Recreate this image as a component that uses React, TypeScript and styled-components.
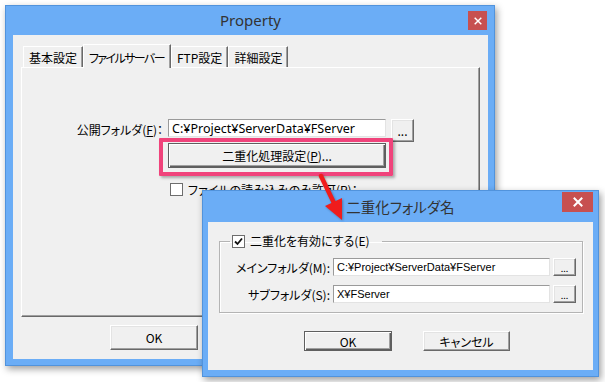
import React from "react";
import styled, { createGlobalStyle, css } from "styled-components";

const GlobalStyle = createGlobalStyle`
  html, body {
    margin: 0;
    padding: 0;
    background: #fff;
  }
  body {
    font-family: "Noto Sans CJK JP", sans-serif;
    font-feature-settings: "palt";
    color: #000;
  }
`;

const Desktop = styled.div`
  position: relative;
  width: 605px;
  height: 382px;
  overflow: hidden;
  background: #fff;
`;

const Window = styled.div<{ $x: number; $y: number; $w: number; $h: number; $pad: string }>`
  position: absolute;
  left: ${(p) => p.$x}px;
  top: ${(p) => p.$y}px;
  width: ${(p) => p.$w}px;
  height: ${(p) => p.$h}px;
  box-sizing: border-box;
  display: flex;
  flex-direction: column;
  padding: ${(p) => p.$pad};
  background: #6badf6;
  border: 1px solid #5193dc;
  box-shadow: 2px 3px 7px rgba(0, 0, 0, 0.38);
`;

const TitleBar = styled.div<{ $h: number }>`
  display: grid;
  grid-template-columns: 1fr auto 1fr;
  height: ${(p) => p.$h}px;
  flex: none;
`;

const Title = styled.div<{ $size: number; $top: number; $latin?: boolean }>`
  grid-column: 2;
  padding-top: ${(p) => p.$top}px;
  font-size: ${(p) => p.$size}px;
  color: #333;
  white-space: nowrap;
  ${(p) =>
    p.$latin &&
    css`
      font-family: "Noto Sans", "Noto Sans CJK JP", sans-serif;
    `}
`;

const CloseButton = styled.div<{ $w: number; $h: number; $top: number; $right: number }>`
  grid-column: 3;
  justify-self: end;
  align-self: start;
  display: flex;
  align-items: center;
  justify-content: center;
  width: ${(p) => p.$w}px;
  height: ${(p) => p.$h}px;
  margin-top: ${(p) => p.$top}px;
  margin-right: ${(p) => p.$right}px;
  background: #c75050;
`;

const Client = styled.div`
  flex: 1;
  display: flex;
  flex-direction: column;
  background: #f0f0f0;
`;

/* ---------- Property dialog ---------- */

const BackClient = styled(Client)`
  padding: 9px 8px 0 8px;
`;

const TabStrip = styled.div`
  display: flex;
  align-items: flex-end;
  height: 23px;
  padding-left: 2px;
  position: relative;
  z-index: 1;
`;

const Tab = styled.div<{ $active?: boolean; $tight?: boolean }>`
  box-sizing: border-box;
  height: ${(p) => (p.$active ? 24 : 21)}px;
  margin-bottom: ${(p) => (p.$active ? -1 : 0)}px;
  padding: ${(p) => (p.$active ? "1px 6px 0 5px" : "0 5px")};
  display: flex;
  align-items: center;
  font-size: 12px;
  letter-spacing: ${(p) => (p.$tight ? "-1.6px" : "0")};
  background: #f0f0f0;
  border-top: 1px solid #fff;
  border-left: 1px solid #fff;
  border-right: 1px solid #696969;
  box-shadow: inset -1px 0 0 #a0a0a0;
  white-space: nowrap;
`;

const TabPanel = styled.div`
  box-sizing: border-box;
  height: 250px;
  border-top: 1px solid #fff;
  border-left: 1px solid #fff;
  border-right: 1px solid #696969;
  border-bottom: 1px solid #696969;
  box-shadow: inset -1px -1px 0 #a0a0a0;
  padding-top: 51px;
`;

const PropForm = styled.div`
  display: grid;
  grid-template-columns: 141px 218px 23px;
  column-gap: 5px;
  align-items: start;
  font-size: 12px;
`;

const FieldLabel = styled.label<{ $top: number }>`
  text-align: right;
  white-space: nowrap;
  padding-top: ${(p) => p.$top}px;
`;

const TextBox = styled.div<{ $h: number; $font: string; $size: number }>`
  box-sizing: border-box;
  height: ${(p) => p.$h}px;
  padding: 0 3px;
  display: flex;
  align-items: center;
  background: #fff;
  border: 1px solid;
  border-color: #9a9a9a #e3e3e3 #e3e3e3 #9a9a9a;
  font-family: ${(p) => p.$font};
  font-size: ${(p) => p.$size}px;
  font-feature-settings: normal;
  white-space: nowrap;
  overflow: hidden;
`;

const Button = styled.div<{ $w: number; $h: number; $default?: boolean; $size?: number }>`
  box-sizing: border-box;
  width: ${(p) => p.$w}px;
  height: ${(p) => p.$h}px;
  display: flex;
  align-items: center;
  justify-content: center;
  background: #f0f0f0;
  font-size: ${(p) => p.$size ?? 12}px;
  white-space: nowrap;
  border: 1px solid;
  border-color: #fff #696969 #696969 #fff;
  box-shadow: inset -1px -1px 0 #a0a0a0, inset 1px 1px 0 #e3e3e3;
  ${(p) =>
    p.$default &&
    css`
      border-color: #5f5f5f;
      box-shadow: inset 1px 1px 0 #fff, inset -1px -1px 0 #5f5f5f, inset -2px -2px 0 #a0a0a0;
    `}
`;

const WideButton = styled(Button)`
  grid-column: 2;
  margin-top: 1px;
`;

const CheckRow = styled.div`
  grid-column: 2 / 4;
  margin-top: 13px;
  padding-left: 2px;
  display: flex;
  align-items: center;
  gap: 5px;
  white-space: nowrap;
`;

const Check = styled.span`
  box-sizing: border-box;
  width: 13px;
  height: 13px;
  flex: none;
  display: inline-flex;
  align-items: center;
  justify-content: center;
  background: #fff;
  border: 1px solid #6d6d6d;
`;

const Footer = styled.div<{ $top: number; $gap: number; $left: number }>`
  display: flex;
  gap: ${(p) => p.$gap}px;
  margin-top: ${(p) => p.$top}px;
  padding-left: ${(p) => p.$left}px;
`;

/* ---------- 二重化フォルダ名 dialog ---------- */

const FrontClient = styled(Client)`
  padding: 0 10px 0 11px;
  font-size: 12px;
`;

const Group = styled.fieldset`
  margin: 11px 0 0 0;
  padding: 0 0 9px 0;
  border: 1px solid #b4b4b4;
  box-shadow: 1px 1px 0 #fff, inset 1px 1px 0 #fff;
  min-width: 0;
`;

const GroupLegend = styled.legend`
  margin-left: 10px;
  padding: 0 12px 0 2px;
  height: 16px;
  line-height: 16px;
  display: flex;
  align-items: center;
  gap: 5px;
  white-space: nowrap;
`;

const FolderGrid = styled.div`
  display: grid;
  grid-template-columns: 110px 217px 23px;
  column-gap: 3px;
  row-gap: 9px;
  margin-top: 9px;
  align-items: center;
`;

const DotsLabel = styled.span`
  font-size: 9px;
  line-height: 1;
  padding-top: 3px;
`;

const Highlight = styled.div`
  position: absolute;
  left: 159px;
  top: 138px;
  width: 234px;
  height: 38px;
  box-sizing: border-box;
  border: 4px solid #f0437b;
  border-radius: 1px;
  box-shadow: 2px 2px 3px rgba(0, 0, 0, 0.3);
  pointer-events: none;
`;

const ArrowSvg = styled.svg`
  position: absolute;
  left: 310px;
  top: 168px;
  overflow: visible;
  filter: drop-shadow(1px 1px 1px rgba(0, 0, 0, 0.3));
`;

function CloseGlyph({ size, stroke }: { size: number; stroke: number }) {
  return (
    <svg width={size} height={size} viewBox="0 0 10 10">
      <path d="M1.5 1.5 L8.5 8.5 M8.5 1.5 L1.5 8.5" stroke="#fff" strokeWidth={stroke} strokeLinecap="square" />
    </svg>
  );
}

function CheckMark() {
  return (
    <svg width="9" height="9" viewBox="0 0 9 9">
      <path d="M1 4.5 L3.5 7 L8 1.5" fill="none" stroke="#111" strokeWidth="1.8" />
    </svg>
  );
}

const LATIN_BACK = `"Noto Sans", "Noto Sans CJK JP", sans-serif`;
const LATIN_FRONT = `"Liberation Sans", "Noto Sans CJK JP", sans-serif`;

export default function App() {
  return (
    <>
      <GlobalStyle />
      <Desktop>
        <Window $x={5} $y={5} $w={490} $h={361} $pad="0 6px 6px 7px">
          <TitleBar $h={29}>
            <Title $size={15} $top={4} $latin>
              Property
            </Title>
            <CloseButton $w={19} $h={19} $top={5} $right={1}>
              <CloseGlyph size={8} stroke={1.8} />
            </CloseButton>
          </TitleBar>
          <BackClient>
            <TabStrip>
              <Tab>基本設定</Tab>
              <Tab $active $tight>
                ファイルサーバー
              </Tab>
              <Tab>FTP設定</Tab>
              <Tab>詳細設定</Tab>
            </TabStrip>
            <TabPanel>
              <PropForm>
                <FieldLabel $top={2}>
                  公開フォルダ(<u>F</u>)：
                </FieldLabel>
                <TextBox $h={18} $font={LATIN_BACK} $size={12.5}>
                  C:¥Project¥ServerData¥FServer
                </TextBox>
                <Button $w={23} $h={23}>
                  ...
                </Button>
                <WideButton $w={218} $h={25} $default>
                  二重化処理設定(<u>P</u>)...
                </WideButton>
                <CheckRow>
                  <Check />
                  ファイルの読み込みのみ許可(R)：
                </CheckRow>
              </PropForm>
            </TabPanel>
            <Footer $top={8} $gap={8} $left={89}>
              <Button $w={88} $h={25}>
                OK
              </Button>
            </Footer>
          </BackClient>
        </Window>

        <Highlight />

        <Window $x={202} $y={190} $w={397} $h={187} $pad="0 5px 6px 5px">
          <TitleBar $h={31}>
            <Title $size={14.5} $top={5}>
              二重化フォルダ名
            </Title>
            <CloseButton $w={31} $h={20} $top={1} $right={0}>
              <CloseGlyph size={10} stroke={2} />
            </CloseButton>
          </TitleBar>
          <FrontClient>
            <Group>
              <GroupLegend>
                <Check>
                  <CheckMark />
                </Check>
                二重化を有効にする(E)
              </GroupLegend>
              <FolderGrid>
                <FieldLabel $top={0}>メインフォルダ(M):</FieldLabel>
                <TextBox $h={18} $font={LATIN_FRONT} $size={11}>
                  C:¥Project¥ServerData¥FServer
                </TextBox>
                <Button $w={23} $h={18}>
                  <DotsLabel>...</DotsLabel>
                </Button>
                <FieldLabel $top={0}>サブフォルダ(S):</FieldLabel>
                <TextBox $h={18} $font={LATIN_FRONT} $size={11}>
                  X¥FServer
                </TextBox>
                <Button $w={23} $h={18}>
                  <DotsLabel>...</DotsLabel>
                </Button>
              </FolderGrid>
            </Group>
            <Footer $top={18} $gap={31} $left={85}>
              <Button $w={88} $h={20} $default>
                OK
              </Button>
              <Button $w={87} $h={20}>
                キャンセル
              </Button>
            </Footer>
          </FrontClient>
        </Window>

        <ArrowSvg width="40" height="56" viewBox="310 168 40 56">
          <path d="M321 176 L333.5 202" stroke="#f01c1c" strokeWidth="4.5" strokeLinecap="round" />
          <polygon points="342,220 325,206 342,198" fill="#f01c1c" />
        </ArrowSvg>
      </Desktop>
    </>
  );
}
